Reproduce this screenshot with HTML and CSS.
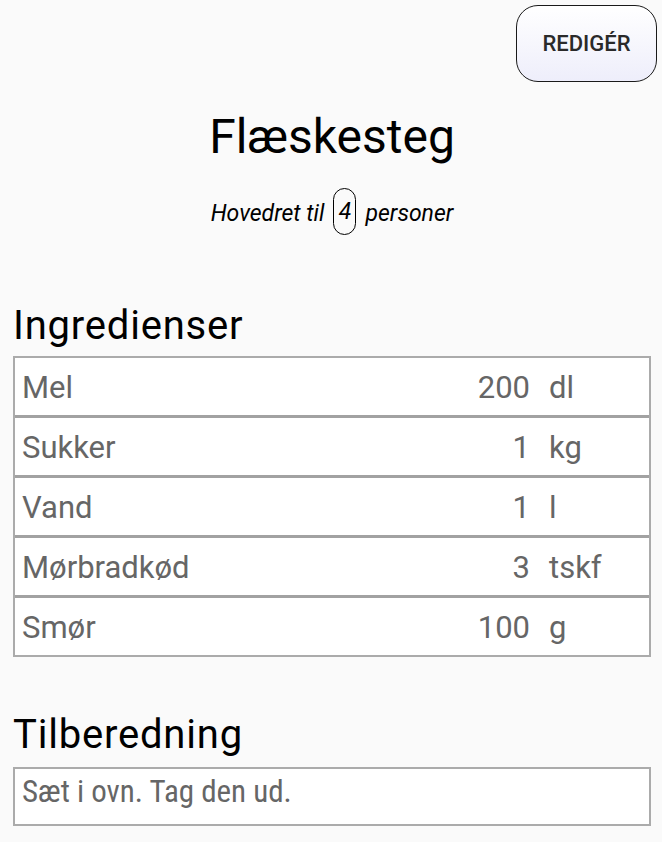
FILE: index.html
```html
<!DOCTYPE html>
<html lang="da">
<head>
<meta charset="utf-8">
<link rel="stylesheet" href="styles.css">
</head>
<body>
<div class="page">
  <div class="topbar">
    <button class="edit-btn">REDIGÉR</button>
  </div>
  <h1 class="title">Flæskesteg</h1>
  <p class="subtitle"><span>Hovedret til</span><span class="count">4</span><span>personer</span></p>

  <h2 class="section">Ingredienser</h2>
  <div class="ingredients">
    <div class="row"><span class="name">Mel</span><span class="amount">200</span><span class="unit">dl</span></div>
    <div class="row"><span class="name">Sukker</span><span class="amount">1</span><span class="unit">kg</span></div>
    <div class="row"><span class="name">Vand</span><span class="amount">1</span><span class="unit">l</span></div>
    <div class="row"><span class="name">Mørbradkød</span><span class="amount">3</span><span class="unit">tskf</span></div>
    <div class="row"><span class="name">Smør</span><span class="amount">100</span><span class="unit">g</span></div>
  </div>

  <h2 class="section section-2">Tilberedning</h2>
  <div class="steps">Sæt i ovn. Tag den ud.</div>
</div>
</body>
</html>
```
FILE: styles.css
```css
html, body {
  margin: 0;
  padding: 0;
  background: #fafafa;
  font-family: Roboto, "Noto Sans", sans-serif;
  color: #000;
}
.page {
  padding: 0 11px 0 13px;
}
.topbar {
  display: flex;
  justify-content: flex-end;
  padding-top: 5px;
  margin-right: -6px;
}
.edit-btn {
  width: 141px;
  height: 77px;
  border: 1.6px solid #1a1a1a;
  border-radius: 22px;
  background: linear-gradient(#ffffff, #eeeefb);
  font-family: Roboto, sans-serif;
  font-weight: 500;
  font-size: 22px;
  color: #2a2a2a;
  padding: 0;
}
.title {
  margin: 27px 0 0;
  text-align: center;
  font-weight: 400;
  font-size: 48px;
  line-height: 56px;
}
.subtitle {
  margin: 21px 0 0;
  display: flex;
  justify-content: center;
  align-items: center;
  gap: 9px;
  font-style: italic;
  font-size: 23px;
  line-height: 46px;
}
.subtitle span:first-child,
.subtitle span:last-child {
  padding-top: 5px;
}
.count {
  display: inline-flex;
  align-items: center;
  justify-content: center;
  box-sizing: border-box;
  width: 23px;
  height: 47px;
  border: 1.5px solid #000;
  border-radius: 12px;
  font-size: 23px;
}
.section {
  margin: 67px 0 0;
  font-weight: 400;
  font-size: 40px;
  line-height: 44px;
  letter-spacing: 0.8px;
}
.section-2 {
  margin-top: 56px;
}
.ingredients {
  margin-top: 8px;
  border: 2px solid #ababab;
  background: #fff;
}
.row {
  display: flex;
  align-items: center;
  height: 55px;
  padding-top: 2px;
  font-size: 31px;
  color: #666;
}
.row + .row {
  border-top: 3px solid #a2a2a2;
}
.name {
  flex: 1;
  padding-left: 7px;
}
.amount {
  text-align: right;
}
.unit {
  width: 119px;
  padding-left: 19px;
  box-sizing: border-box;
}
.steps {
  margin-top: 10px;
  border: 2px solid #ababab;
  background: #fff;
  height: 51px;
  padding: 4px 0 0 7px;
  font-family: "Roboto Condensed", Roboto, sans-serif;
  font-stretch: 82%;
  font-size: 31px;
  color: #666;
}
```
